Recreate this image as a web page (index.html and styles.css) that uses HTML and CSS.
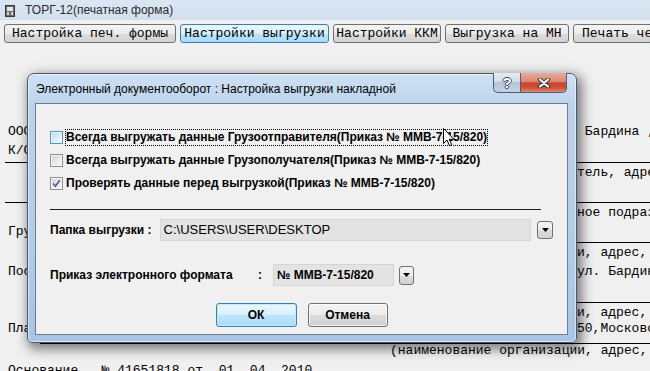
FILE: index.html
```html
<!DOCTYPE html>
<html lang="ru">
<head>
    <meta charset="UTF-8">
    <title>ТОРГ-12(печатная форма)</title>
    <link rel="stylesheet" href="styles.css">
</head>
<body>
    <div class="window">
        <!-- заголовок окна -->
        <div class="titlebar">
            <svg class="app-icon" width="10" height="12" viewBox="0 0 10 12">
                <rect x="0.5" y="0.5" width="9" height="11" fill="#6b6b6b" stroke="#3a3a3a"/>
                <rect x="2" y="2" width="6" height="4" fill="#e8e8e8"/>
                <rect x="2" y="7" width="2" height="3" fill="#d0d0d0"/>
                <rect x="6" y="7" width="2" height="3" fill="#d0d0d0"/>
            </svg>
            <span class="app-title">ТОРГ-12(печатная форма)</span>
        </div>

        <!-- панель кнопок -->
        <div class="toolbar">
            <button class="tool-btn tool-btn--print">Настройка печ. формы</button>
            <button class="tool-btn tool-btn--export tool-btn--active">Настройки выгрузки</button>
            <button class="tool-btn tool-btn--kkm">Настройки ККМ</button>
            <button class="tool-btn tool-btn--mn">Выгрузка на МН</button>
            <button class="tool-btn tool-btn--check">Печать чека</button>
        </div>

        <!-- печатная форма -->
        <div class="doc">
            <div class="doc-row"><span class="doc-left">ООО "Торговый дом", ИНН 7701234567, г. Москва,</span><span class="doc-right"> Бардина , д. 4</span></div>
            <div class="doc-row"><span class="doc-left">К/С 30101810400000000225, БИК 044525225</span><span class="doc-right"></span></div>
            <div class="rule rule--b"></div>
            <div class="doc-row"><span class="doc-left">          (организация-грузоотправи</span><span class="doc-right">тель, адрес, телефон</span></div>
            <div class="doc-row"><span class="doc-left"></span><span class="doc-right"></span></div>
            <div class="rule rule--c"></div>
            <div class="doc-row"><span class="doc-left">                    (структурн</span><span class="doc-right">ное подразделение)</span></div>
            <div class="doc-row"><span class="doc-left">Грузополучатель  ООО "Ромашка", ИНН 7709876543</span><span class="doc-right"></span></div>
            <div class="rule rule--c rule--inner"></div>
            <div class="doc-row"><span class="doc-left">          (наименование организац</span><span class="doc-right">и, адрес, телефон</span></div>
            <div class="doc-row"><span class="doc-left">Поставщик  ООО "Торговый дом", г. Москва,</span><span class="doc-right">ул. Бардина, д. 4</span></div>
            <div class="doc-row"><span class="doc-left"></span><span class="doc-right"></span></div>
            <div class="rule rule--b rule--inner"></div>
            <div class="doc-row"><span class="doc-left">          (наименование организац</span><span class="doc-right">и, адрес, телефон</span></div>
            <div class="doc-row doc-row--tight"><span class="doc-left">Плательщик  ООО "Ромашка", 1170</span><span class="doc-right">50,Московская обл.</span></div>
            <div class="rule rule--d rule--low"></div>
            <div class="doc-row doc-row--tight"><span class="doc-note">(наименование организации, адрес, телефон)</span></div>
            <div class="doc-row doc-row--last"><span class="doc-left">Основание   № 41651818 от  01 .04 .2010</span></div>
        </div>

        <!-- диалог настроек выгрузки -->
        <div class="dialog">
            <div class="dialog-head">
                <span class="dialog-title">Электронный документооборот : Настройка выгрузки накладной</span>
                <div class="cap-btns">
                    <span class="cap-btn cap-help">?</span>
                    <span class="cap-btn cap-close">
                        <svg width="14" height="10" viewBox="0 0 14 10">
                            <path d="M3 1.5 L11 8.5 M11 1.5 L3 8.5" stroke="#3c3c3c" stroke-width="4.2" stroke-linecap="round"/>
                            <path d="M3 1.5 L11 8.5 M11 1.5 L3 8.5" stroke="#ffffff" stroke-width="2.2" stroke-linecap="round"/>
                        </svg>
                    </span>
                </div>
            </div>
            <div class="dialog-body">
                <div class="checks">
                    <label class="check">
                        <span class="check-box check-box--hover"></span>
                        <span class="check-label check-label--focus">Всегда выгружать данные Грузоотправителя(Приказ № ММВ-7-15/820)</span>
                    </label>
                    <label class="check">
                        <span class="check-box"></span>
                        <span class="check-label">Всегда выгружать данные Грузополучателя(Приказ № ММВ-7-15/820)</span>
                    </label>
                    <label class="check">
                        <span class="check-box">
                            <svg width="9" height="9" viewBox="0 0 9 9">
                                <path d="M1.2 4.6 L3.4 7.2 L7.8 1.2" fill="none" stroke="#4b5e8e" stroke-width="1.6"/>
                            </svg>
                        </span>
                        <span class="check-label">Проверять данные перед выгрузкой(Приказ № ММВ-7-15/820)</span>
                    </label>
                </div>

                <div class="separator"></div>

                <div class="field-row field-row--folder">
                    <span class="field-label field-label--folder">Папка выгрузки :</span>
                    <div class="field field--folder">C:\USERS\USER\DESKTOP</div>
                    <span class="combo-btn">
                        <svg width="7" height="4" viewBox="0 0 7 4"><path d="M0 0 H7 L3.5 4 Z" fill="#000"/></svg>
                    </span>
                </div>

                <div class="field-row field-row--format">
                    <span class="field-label field-label--format">Приказ электронного формата</span>
                    <span class="field-colon">:</span>
                    <div class="field field--format">№ ММВ-7-15/820</div>
                    <span class="combo-btn combo-btn--small">
                        <svg width="7" height="4" viewBox="0 0 7 4"><path d="M0 0 H7 L3.5 4 Z" fill="#000"/></svg>
                    </span>
                </div>

                <div class="dialog-buttons">
                    <button class="dlg-btn dlg-btn--default">ОК</button>
                    <button class="dlg-btn">Отмена</button>
                </div>
            </div>
        </div>

        <!-- указатель мыши -->
        <svg class="cursor" width="12" height="19" viewBox="0 0 12 19">
            <path d="M0.5 0.5 L0.5 15.5 L4 12 L6.5 17.8 L8.7 16.8 L6.3 11.3 L11 11.3 Z" fill="#ffffff" stroke="#000" stroke-width="1"/>
        </svg>
    </div>
</body>
</html>
```

FILE: styles.css
```css
* {
    margin: 0;
    padding: 0;
    box-sizing: border-box;
}

body {
    width: 650px;
    height: 371px;
    overflow: hidden;
    background: #f0f0f0;
    font-family: 'Liberation Sans', Arial, sans-serif;
    color: #000;
}

.window {
    position: relative;
    height: 371px;
    overflow: hidden;
}

/* заголовок окна */
.titlebar {
    height: 20px;
    display: flex;
    align-items: center;
    padding-left: 5px;
    background: linear-gradient(#dbe6f3, #d3dfee);
}

.app-icon {
    margin-top: 2px;
}

.app-title {
    margin-left: 10px;
    font-size: 12px;
    color: #2b2b2b;
}

/* панель кнопок */
.toolbar {
    height: 24px;
    display: flex;
    gap: 4px;
    padding: 4px 0 0 4px;
    white-space: nowrap;
}

.tool-btn {
    flex: none;
    height: 19px;
    border: 1px solid #707070;
    border-radius: 3px;
    background: linear-gradient(#f4f4f4 0%, #ebebeb 50%, #dddddd 51%, #d2d2d2 100%);
    font-family: 'Liberation Mono', 'Courier New', monospace;
    font-size: 13px;
    color: #000;
    text-align: center;
    overflow: hidden;
}

.tool-btn--print { width: 172px; }
.tool-btn--export { width: 149px; }
.tool-btn--kkm { width: 108px; }
.tool-btn--mn { width: 124px; }
.tool-btn--check { width: 110px; text-align: left; padding-left: 8px; }

.tool-btn--active {
    border-color: #3c7fb1;
    background: linear-gradient(#eaf6fd 0%, #d9f0fc 50%, #bee6fd 51%, #a7d9f5 100%);
}

/* печатная форма */
.doc {
    padding: 78px 0 0 8px;
    font-family: 'Liberation Mono', 'Courier New', monospace;
    font-size: 13px;
}

.doc-row {
    display: grid;
    grid-template-columns: 569px 1fr;
    height: 19px;
    line-height: 19px;
    white-space: pre;
    overflow: hidden;
}

.doc-row--tight {
    height: 14px;
    line-height: 14px;
}

.doc-row--last {
    height: 20px;
    line-height: 20px;
    margin-top: 3px;
}

.doc-left,
.doc-right {
    overflow: hidden;
}

.doc-note {
    grid-column: 1 / 3;
    padding-left: 382px;
}

.rule {
    height: 1px;
    background: #000;
    margin-left: -3px;
}

.rule--b { margin-top: 2px; }
.rule--c { margin-top: 1px; }
.rule--d { margin-top: 7px; }
.rule--inner { margin-left: 300px; }
.rule--low { margin-left: 32px; }

/* диалог */
.dialog {
    position: absolute;
    left: 27px;
    top: 73px;
    width: 550px;
    height: 270px;
    display: flex;
    flex-direction: column;
    padding: 0 8px 7px 7px;
    border: 1px solid #46586e;
    border-radius: 7px 7px 5px 5px;
    background: linear-gradient(180deg, #cfe1f3 0%, #bcd3ec 12%, #b3cce8 60%, #a9c5e5 100%);
    box-shadow: inset 0 0 0 1px rgba(255, 255, 255, 0.55), 3px 4px 12px 2px rgba(0, 0, 0, 0.5);
}

.dialog-head {
    height: 29px;
    display: flex;
    justify-content: space-between;
}

.dialog-title {
    align-self: center;
    padding-left: 1px;
    font-size: 12px;
    color: #000;
}

.cap-btns {
    display: flex;
    margin: -1px 1px 0 0;
    height: 20px;
}

.cap-btn {
    height: 20px;
    display: flex;
    align-items: center;
    justify-content: center;
    border: 1px solid #4c5d74;
    border-top: none;
}

.cap-help {
    width: 27px;
    border-right: none;
    border-radius: 0 0 0 5px;
    background: linear-gradient(#e4ebf3 0%, #d3dde9 45%, #b5c5d8 50%, #c3d3e5 100%);
    font-size: 15px;
    font-weight: 700;
    color: #ffffff;
    text-shadow: 1px 0 #3f4a58, -1px 0 #3f4a58, 0 1px #3f4a58, 0 -1px #3f4a58;
}

.cap-close {
    width: 47px;
    border-radius: 0 0 5px 0;
    background: linear-gradient(#e9ab9c 0%, #dc8772 45%, #c8432c 52%, #cf5236 78%, #e08a6e 100%);
}

.dialog-body {
    flex: 1;
    border: 1px solid #6b7d92;
    background: #f0f0f0;
    padding: 22px 14px 0 14px;
    display: flex;
    flex-direction: column;
}

/* флажки */
.checks {
    display: flex;
    flex-direction: column;
}

.check {
    height: 23px;
    display: flex;
    align-items: center;
    gap: 2px;
}

.check-box {
    width: 13px;
    height: 13px;
    flex: none;
    display: flex;
    align-items: center;
    justify-content: center;
    border: 1px solid #8f8f8f;
    background: linear-gradient(135deg, #d2d2d2 0%, #e8e8e8 55%, #fafafa 100%);
    box-shadow: inset 0 0 0 1px #f6f6f6;
}

.check-box--hover {
    border-color: #5b94c3;
    background: linear-gradient(135deg, #b9ddf5 0%, #d8eefb 55%, #f2faff 100%);
    box-shadow: inset 0 0 0 1px #e9f6fe;
}

.check-label {
    height: 17px;
    line-height: 15px;
    border: 1px dotted transparent;
    font-size: 12px;
    font-weight: 700;
    white-space: nowrap;
}

.check-label--focus {
    border-color: #000;
}

.separator {
    width: 491px;
    height: 1px;
    margin-top: 14px;
    background: #1e1e1e;
}

/* поля */
.field-row {
    display: flex;
    align-items: center;
    height: 22px;
    font-size: 12px;
    font-weight: 700;
    white-space: nowrap;
}

.field-row--folder {
    margin-top: 9px;
}

.field-row--format {
    margin-top: 23px;
}

.field-label--folder {
    width: 110px;
}

.field-label--format {
    width: 208px;
}

.field-colon {
    width: 15px;
}

.field {
    height: 22px;
    line-height: 20px;
    padding-left: 3px;
    border: 1px solid #d6d6d6;
    background: #e3e3e3;
    overflow: hidden;
}

.field--folder {
    width: 373px;
    font-size: 13px;
    font-weight: 400;
}

.field--format {
    width: 121px;
}

.combo-btn {
    width: 16px;
    height: 18px;
    margin-left: 6px;
    display: flex;
    align-items: center;
    justify-content: center;
    border: 1px solid #707070;
    border-radius: 3px;
    background: linear-gradient(#f4f4f4 0%, #ebebeb 50%, #dddddd 51%, #d2d2d2 100%);
}

.combo-btn--small {
    width: 15px;
    height: 19px;
    margin-left: 5px;
}

/* кнопки диалога */
.dialog-buttons {
    display: flex;
    justify-content: center;
    gap: 11px;
    margin-top: 17px;
}

.dlg-btn {
    width: 80px;
    height: 24px;
    border: 1px solid #707070;
    border-radius: 3px;
    background: linear-gradient(#f4f4f4 0%, #ebebeb 50%, #dddddd 51%, #d0d0d0 100%);
    box-shadow: inset 0 0 0 1px rgba(255, 255, 255, 0.7);
    font-family: 'Liberation Sans', Arial, sans-serif;
    font-size: 12px;
    font-weight: 700;
    color: #000;
}

.dlg-btn--default {
    width: 81px;
    border-color: #3c7fb1;
    background: linear-gradient(#eaf6fd 0%, #d9f0fc 50%, #bee6fd 51%, #a9daf5 100%);
    box-shadow: inset 0 0 0 1px #c4ebfd;
}

/* указатель */
.cursor {
    position: absolute;
    left: 443px;
    top: 128px;
}
```
